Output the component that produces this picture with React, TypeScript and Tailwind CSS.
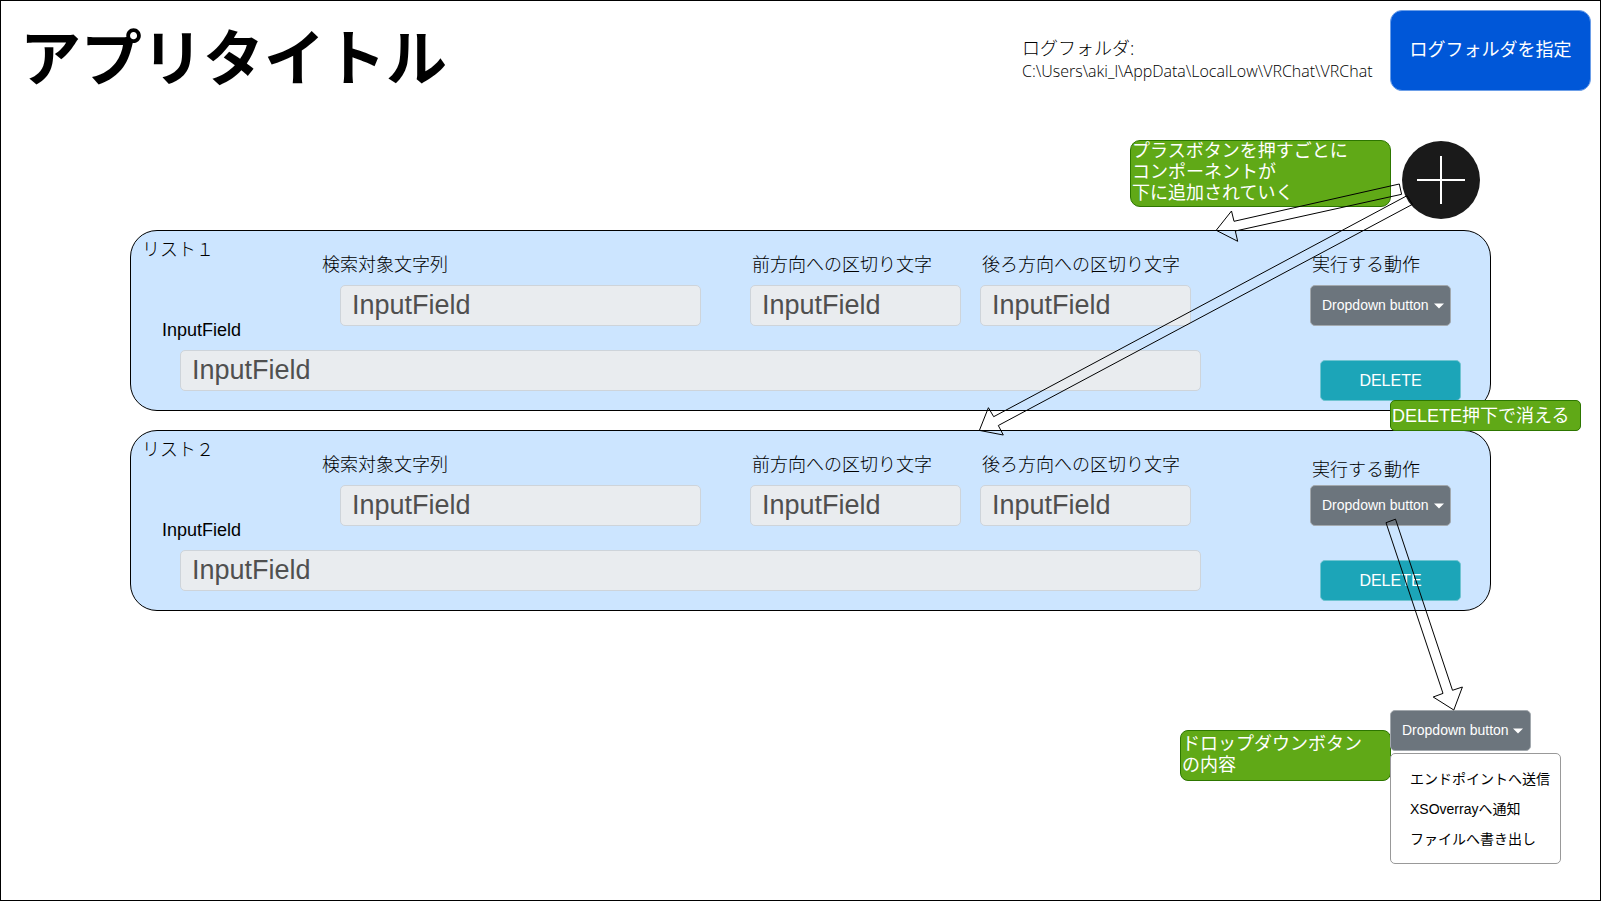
import { useId } from "react";
import type { ReactNode } from "react";

const ACTIONS = ["エンドポイントへ送信", "XSOverrayへ通知", "ファイルへ書き出し"];

function Caret() {
  return (
    <svg className="h-[6px] w-[10px] fill-white" viewBox="0 0 10 6" aria-hidden="true">
      <path d="M0 0.5h10L5 5.5z" />
    </svg>
  );
}

function Note({ className, children }: { className: string; children: ReactNode }) {
  return (
    <p
      className={`border border-[#2d7600] bg-[#60a917] pl-px text-[18px] whitespace-nowrap text-white ${className}`}
    >
      {children}
    </p>
  );
}

function TextField({ label, className, inputClass }: { label: string; className: string; inputClass: string }) {
  const id = useId();
  return (
    <div className={`mt-[15px] flex flex-col ${className}`}>
      <label htmlFor={id} className="mb-[9px] pl-[2px] text-[18px] leading-[22px] font-light whitespace-nowrap">
        {label}
      </label>
      <input
        id={id}
        type="text"
        defaultValue="InputField"
        className={`h-[41px] min-w-0 rounded-[5px] border border-[#ced4da] bg-[#e9ecef] px-[11px] text-[27px] text-[#505050] outline-none ${inputClass}`}
      />
    </div>
  );
}

function WideField() {
  const id = useId();
  return (
    <div className="mr-[119px] flex flex-1 flex-col">
      <label htmlFor={id} className="mb-[9px] self-start text-[18px] leading-[22px]">
        InputField
      </label>
      <input
        id={id}
        type="text"
        defaultValue="InputField"
        className="ml-[18px] h-[41px] min-w-0 rounded-[5px] border border-[#ced4da] bg-[#e9ecef] px-[11px] text-[27px] text-[#505050] outline-none"
      />
    </div>
  );
}

function ListCard({ title, labelSpacing, note }: { title: string; labelSpacing: string; note?: ReactNode }) {
  const actionId = useId();
  return (
    <section className="relative rounded-[27px] border border-black bg-[#cce5ff] pt-2 pb-[9px]">
      <div className="flex items-start pr-[39px] pl-[11px]">
        <h2 className="w-[178px] shrink-0 text-[18px] leading-[22px] font-light">{title}</h2>
        <TextField label="検索対象文字列" className="mr-[49px] min-w-0 flex-1" inputClass="ml-[20px]" />
        <TextField label="前方向への区切り文字" className="mr-[19px] w-[211px] shrink-0" inputClass="w-full" />
        <TextField label="後ろ方向への区切り文字" className="mr-[119px] w-[211px] shrink-0" inputClass="w-full" />
        <div className="flex w-[141px] shrink-0 flex-col">
          <label
            htmlFor={actionId}
            className={`pl-[2px] text-[18px] leading-[22px] font-light whitespace-nowrap ${labelSpacing}`}
          >
            実行する動作
          </label>
          <div className="relative">
            <select
              id={actionId}
              className="h-[41px] w-full appearance-none rounded-[5px] border border-[#a3a9ae] bg-[#6c757d] pr-5 pl-[11px] text-[14px] text-white outline-none"
            >
              <option>Dropdown button</option>
              {ACTIONS.map((a) => (
                <option key={a}>{a}</option>
              ))}
            </select>
            <span className="pointer-events-none absolute inset-y-0 right-[7px] flex items-center">
              <Caret />
            </span>
          </div>
        </div>
      </div>
      <div className="-mt-[7px] flex items-start pr-[29px] pl-[31px]">
        <WideField />
        <button
          type="button"
          className="mt-[41px] h-[41px] w-[141px] rounded-[5px] border border-[#6fc4d1] bg-[#1ca5b8] text-[16px] text-white"
        >
          DELETE
        </button>
      </div>
      {note}
    </section>
  );
}

function Arrows() {
  return (
    <svg
      className="pointer-events-none absolute top-0 right-0 z-20 h-[720px] w-[640px] fill-none stroke-black"
      viewBox="960 1 640 720"
      aria-hidden="true"
    >
      <path d="M1399.3 184 1401.6 194.3 1235.3 231 1237.7 241.3 1216.2 230.3 1231.5 211 1234 221.3z" />
      <path d="M1407 195.7 1412.5 204.3 998.3 425.5 1003.3 435 979.4 430.4 988.4 407.7 993.7 416.7z" />
      <path d="M1386 522.7 1395.5 519.2 1452.5 690.3 1462.4 687 1453.8 710 1433.2 697 1443 693.4z" />
    </svg>
  );
}

export default function App() {
  return (
    <main
      lang="ja"
      className="relative mr-5 border border-black bg-white pb-9 font-['Liberation_Sans','Noto_Sans_CJK_JP',sans-serif] text-black"
    >
      <header className="flex items-start pt-[9px] pr-[9px] pl-[19px]">
        <h1 className="mt-5 flex-1 text-[61px] leading-[61px] font-bold whitespace-nowrap">アプリタイトル</h1>
        <div className="w-[368px] pt-[27px] font-['Open_Sans','Noto_Sans_CJK_JP',sans-serif] font-light">
          <p className="text-[18px] leading-[22px]">ログフォルダ:</p>
          <p className="text-[16px] leading-[24px] whitespace-nowrap">
            C:\Users\aki_l\AppData\LocalLow\VRChat\VRChat
          </p>
        </div>
        <button
          type="button"
          className="h-[81px] w-[201px] rounded-[12px] border border-[#6c9ee8] bg-[#0057d8] text-[18px] whitespace-nowrap text-white"
        >
          ログフォルダを指定
        </button>
      </header>

      <div className="mt-[49px] flex items-start justify-end gap-[11px] pr-[120px]">
        <Note className="h-[67px] w-[261px] rounded-[10px] leading-[21px]">
          プラスボタンを押すごとに
          <br />
          コンポーネントが
          <br />
          下に追加されていく
        </Note>
        <button
          type="button"
          aria-label="追加"
          className="mt-px flex size-[78px] items-center justify-center rounded-full bg-[#1a1a1a]"
        >
          <svg className="size-[50px] fill-none stroke-white stroke-2" viewBox="0 0 50 50" aria-hidden="true">
            <path d="M25 1v48M1 25h48" />
          </svg>
        </button>
      </div>

      <div className="mt-[11px] mr-[109px] ml-[129px] flex flex-col gap-[19px]">
        <ListCard
          title="リスト１"
          labelSpacing="mt-[15px] mb-[9px]"
          note={
            <Note className="absolute -right-[91px] -bottom-[21px] z-10 h-[31px] w-[191px] rounded-[5px] leading-[30px]">
              DELETE押下で消える
            </Note>
          }
        />
        <ListCard title="リスト２" labelSpacing="mt-[20px] mb-[4px]" />
      </div>

      <div className="mt-[99px] flex items-start justify-end pr-[39px]">
        <Note className="mt-5 -mr-px h-[51px] w-[211px] rounded-[8px] pt-[3px] leading-[21px]">
          ドロップダウンボタン
          <br />
          の内容
        </Note>
        <div className="w-[171px]">
          <button
            type="button"
            aria-expanded="true"
            className="flex h-[41px] w-[141px] items-center justify-between rounded-[5px] border border-[#a3a9ae] bg-[#6c757d] pr-[7px] pl-[11px] text-[14px] text-white"
          >
            Dropdown button
            <Caret />
          </button>
          <ul className="mt-[2px] h-[111px] rounded-[5px] border border-[#999999] bg-white pt-[10px] pl-[19px] text-[14px] leading-[30px] whitespace-nowrap">
            {ACTIONS.map((a) => (
              <li key={a}>{a}</li>
            ))}
          </ul>
        </div>
      </div>

      <Arrows />
    </main>
  );
}
